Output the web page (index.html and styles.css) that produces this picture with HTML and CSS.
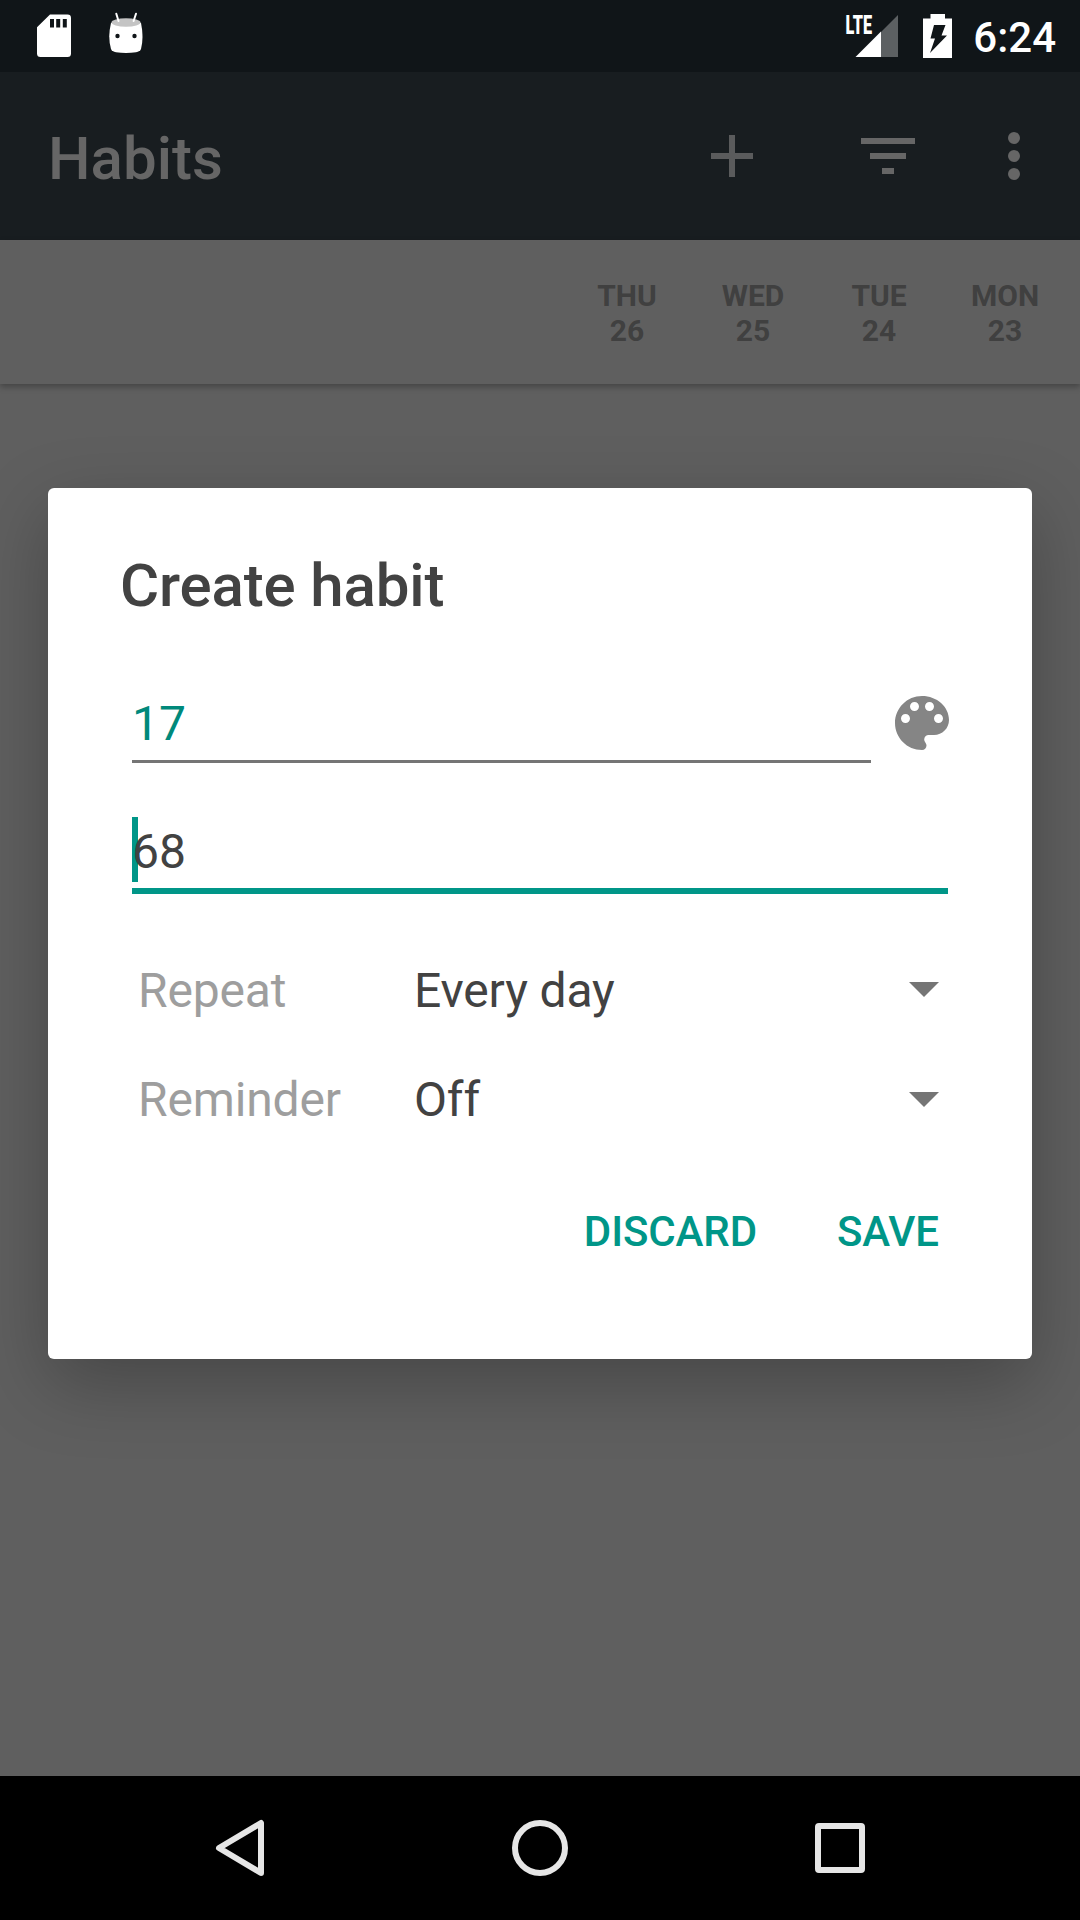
FILE: index.html
```html
<!DOCTYPE html>
<html lang="en">
<head>
<meta charset="utf-8">
<title>Habits</title>
<link rel="stylesheet" href="styles.css">
</head>
<body>
<div class="screen">
  <header class="status-bar">
    <div class="status-left">
      <svg class="sd-icon" width="36" height="44" viewBox="36 14 36 44"><path fill="#fff" fill-rule="evenodd" d="M50 14.6H67.500Q71 14.600 71 18V53.500Q71 57 67.500 57H40.500Q37 57 37 53.500V27.200ZM50 19V27.500H54V19ZM56.200 19V27.500H60.200V19ZM62.800 19V27.500H66.800V19Z"/></svg>
      <svg class="bot-icon" width="36" height="42" viewBox="108 12 36 42"><path fill="#fff" d="M111 23Q126 18 141 23Q144 37 141 49Q140 51.500 136 52.200Q126 53.700 116 52.200Q112 51.500 111 49Q107.500 37 111 23Z"/><ellipse cx="126" cy="22.500" rx="14.600" ry="4.200" fill="#c4c4c4"/><path stroke="#fff" stroke-width="2" stroke-linecap="round" d="M116.300 13.800L118.500 21M136 13.800L133.600 21"/><circle cx="117.500" cy="36" r="2.200" fill="#101518"/><circle cx="134.500" cy="36" r="2.200" fill="#101518"/></svg>
    </div>
    <div class="status-right">
      <svg class="signal-icon" width="58" height="54" viewBox="841 4 58 54"><path fill="#5c6062" d="M881 57V32L898 15V57Z"/><path fill="#fff" d="M855.500 57L881 31.500V57Z"/><text class="lte" x="845.500" y="33.500" textLength="26.500" lengthAdjust="spacingAndGlyphs">LTE</text></svg>
      <svg class="battery-icon" width="30" height="45" viewBox="923 14 30 45"><path fill="#fff" fill-rule="evenodd" d="M930.500 14H945V18.500H952V58H923V18.500H930.500ZM934 25H945.500L941.500 35.500H947L930 53L935 38.500H930.500Z"/></svg>
      <span class="clock">6:24</span>
    </div>
  </header>
  <div class="app-bar">
    <h1 class="app-title">Habits</h1>
    <svg class="action" width="72" height="72" viewBox="0 0 24 24"><path fill="#5a5b5c" d="M19 13h-6v6h-2v-6H5v-2h6V5h2v6h6z"/></svg>
    <svg class="action filter" width="72" height="72" viewBox="0 0 24 24"><path fill="#666" d="M10 18h4v-2h-4zM3 6v2h18V6zM6 13h12v-2H6z"/></svg>
    <svg class="action more" width="72" height="72" viewBox="0 0 24 24"><g fill="#666"><circle cx="12" cy="6" r="2"/><circle cx="12" cy="12" r="2"/><circle cx="12" cy="18" r="2"/></g></svg>
  </div>
  <div class="days">
    <div class="day">THU<br>26</div>
    <div class="day">WED<br>25</div>
    <div class="day">TUE<br>24</div>
    <div class="day">MON<br>23</div>
  </div>
  <main class="content">
    <section class="dialog">
      <h2 class="dialog-title">Create habit</h2>
      <div class="name-row">
        <div class="field name">17</div>
        <svg class="palette" width="72" height="72" viewBox="0 0 24 24"><path fill="#858585" d="M12 3c-4.970 0-9 4.030-9 9s4.030 9 9 9c.83 0 1.500-.67 1.500-1.500 0-.39-.15-.74-.39-1.010-.23-.26-.38-.61-.38-.99 0-.83.67-1.500 1.500-1.500H16c2.760 0 5-2.240 5-5 0-4.420-4.030-8-9-8zm-5.500 9c-.83 0-1.500-.67-1.500-1.500S5.670 9 6.500 9 8 9.670 8 10.500 7.330 12 6.500 12zm3-4C8.670 8 8 7.330 8 6.500S8.670 5 9.500 5s1.500.67 1.500 1.500S10.330 8 9.500 8zm5 0c-.83 0-1.500-.67-1.500-1.500S13.670 5 14.500 5s1.500.67 1.500 1.500S15.330 8 14.500 8zm3 4c-.83 0-1.500-.67-1.500-1.500S16.670 9 17.500 9s1.500.67 1.500 1.500-.67 1.500-1.500 1.500z"/></svg>
      </div>
      <div class="field question"><span class="question-text">68</span></div>
      <div class="options">
        <div class="option repeat"><span class="label">Repeat</span><span class="value">Every day</span><svg class="arrow" width="30" height="15" viewBox="0 0 30 15"><path fill="#757575" d="M0 0h30L15 15z"/></svg></div>
        <div class="option"><span class="label">Reminder</span><span class="value">Off</span><svg class="arrow" width="30" height="15" viewBox="0 0 30 15"><path fill="#757575" d="M0 0h30L15 15z"/></svg></div>
      </div>
      <div class="buttons"><span>DISCARD</span><span>SAVE</span></div>
    </section>
  </main>
  <nav class="nav-bar">
    <svg width="60" height="60" viewBox="0 0 60 60"><path d="M51 5V55L9 30Z"/></svg>
    <svg width="60" height="60" viewBox="0 0 60 60"><circle cx="30" cy="30" r="25"/></svg>
    <svg width="60" height="60" viewBox="0 0 60 60"><rect x="8" y="8" width="44" height="44" rx="1"/></svg>
  </nav>
</div>
</body>
</html>
```
FILE: styles.css
```css
* { box-sizing: border-box; }
body { margin: 0; font-family: Roboto, sans-serif; }
h1, h2 { margin: 0; font-weight: 500; }
svg { display: block; flex: none; }

.screen {
  width: 1080px;
  height: 1920px;
  display: flex;
  flex-direction: column;
  background: #5f5f5f;
  overflow: hidden;
}

.status-bar {
  height: 72px;
  display: flex;
  justify-content: space-between;
  background: #101518;
  padding: 0 24px 0 36px;
}
.status-left { display: flex; gap: 36px; padding-top: 14px; }
.bot-icon { margin-top: -2px; }
.status-right { display: flex; padding-top: 14px; }
.signal-icon { margin-top: -10px; }
.battery-icon { margin-left: 24px; }
.lte { font-size: 26px; font-weight: 900; fill: #fff; }
.clock {
  margin-left: 20px;
  font-size: 42px;
  font-weight: 500;
  line-height: 48px;
  color: #fff;
}

.app-bar {
  height: 168px;
  display: flex;
  align-items: center;
  padding: 0 30px 0 48px;
  background: #181d20;
}
.app-title {
  flex: 1;
  padding-top: 5px;
  font-size: 60px;
  line-height: 72px;
  color: #666;
}
.filter { margin-left: 84px; }
.more { margin-left: 54px; }

.days {
  height: 144px;
  display: flex;
  flex: none;
  justify-content: flex-end;
  align-items: center;
  padding: 2px 12px 0 0;
  box-shadow: 0 3px 6px rgba(0, 0, 0, .28);
}
.day {
  width: 126px;
  text-align: center;
  font-size: 30px;
  font-weight: 700;
  line-height: 35px;
  color: #404040;
}

.content { flex: 1; padding: 104px 48px 0; }
.dialog {
  height: 871px;
  padding: 67px 84px 0;
  border-radius: 6px;
  background: #fff;
  box-shadow: 0 24px 72px rgba(0, 0, 0, .26);
}
.dialog-title {
  margin-left: -12px;
  font-size: 60px;
  line-height: 62px;
  letter-spacing: -.15px;
  color: #424242;
}
.name-row { display: flex; margin-top: 70px; }
.field { font-size: 48px; line-height: 56px; padding-top: 9px; }
.name {
  flex: none;
  width: 739px;
  height: 76px;
  color: #00897b;
  border-bottom: 3px solid #757575;
}
.palette { margin-left: 15px; }
.question {
  width: 816px;
  height: 77px;
  margin-top: 54px;
  padding-top: 0;
  color: #424242;
  border-bottom: 6px solid #009688;
}
.question-text {
  display: block;
  width: 60px;
  height: 65px;
  line-height: 70px;
  background: linear-gradient(#009688, #009688) left / 6px 100% no-repeat;
}

.options { padding: 41px 9px 0 6px; }
.option {
  height: 110px;
  display: flex;
  align-items: center;
  font-size: 48px;
  line-height: 56px;
  letter-spacing: -.15px;
}
.repeat span { padding-top: 2px; }
.arrow { margin-bottom: 2px; }
.label { width: 276px; color: #9e9e9e; }
.value { flex: 1; color: #424242; }

.buttons {
  display: flex;
  justify-content: flex-end;
  gap: 80px;
  margin-top: 52px;
  padding-right: 9px;
  font-size: 42px;
  font-weight: 500;
  line-height: 50px;
  letter-spacing: -.1px;
  color: #009688;
}

.nav-bar {
  height: 144px;
  display: flex;
  justify-content: center;
  align-items: center;
  gap: 240px;
  background: #000;
}
.nav-bar svg { fill: none; stroke: #e6e6e6; stroke-width: 6; stroke-linejoin: round; }
```
